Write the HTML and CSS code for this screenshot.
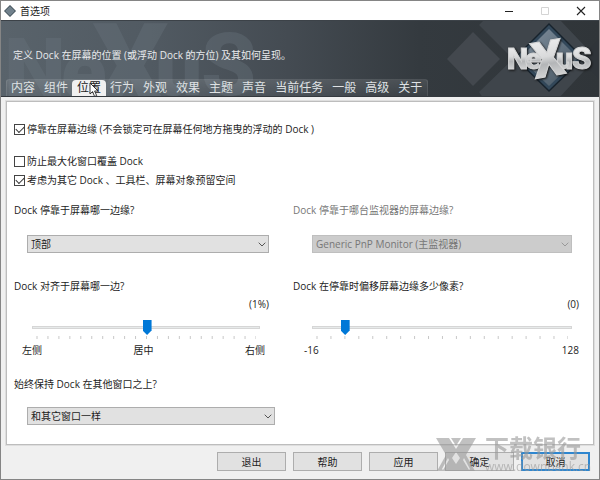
FILE: index.html
```html
<!DOCTYPE html>
<html lang="zh-CN">
<head>
<meta charset="utf-8">
<title>首选项</title>
<link rel="stylesheet" href="styles.css">
</head>
<body>
<div class="window">
  <div class="titlebar">
    <svg class="app-icon" viewBox="0 0 12 12" aria-hidden="true"><path d="M6 0L12 6 6 12 0 6Z" fill="#35424c"/><path d="M6 1L11 6 6 11 1 6Z" fill="#71818c"/></svg>
    <h1 class="title">首选项</h1>
    <button class="caption" type="button" aria-label="最小化"><svg viewBox="0 0 10 10"><path d="M1 5.5H9" stroke="#222"/></svg></button>
    <button class="caption" type="button" aria-label="最大化" disabled><svg viewBox="0 0 10 10"><path d="M1.5 1.5H8.5V8.5H1.5Z" fill="none" stroke="#d4d4d4"/></svg></button>
    <button class="caption" type="button" aria-label="关闭"><svg viewBox="0 0 10 10"><path d="M1 1L9 9M9 1L1 9" stroke="#222" stroke-width="1.1"/></svg></button>
  </div>

  <header class="banner">
    <svg class="ghost" viewBox="0 0 260 77" aria-hidden="true">
      <g class="ghost-text">
        <text x="3" y="79" font-size="88">N</text>
        <text x="60" y="79" font-size="84">e</text>
        <text x="91" y="88" font-size="120">X</text>
        <text x="154" y="74" font-size="84">u</text>
        <text x="200" y="74" font-size="88">S</text>
      </g>
    </svg>
    <svg class="brand" viewBox="0 0 170 77" role="img" aria-label="NeXuS">
      <defs>
        <linearGradient id="metal" x1="0" y1="0" x2="0" y2="1">
          <stop offset="0" stop-color="#f6f6f6"/><stop offset=".45" stop-color="#d9dadb"/><stop offset=".58" stop-color="#b3b5b7"/><stop offset="1" stop-color="#ededed"/>
        </linearGradient>
        <linearGradient id="gem" x1="0" y1="0" x2="1" y2="1">
          <stop offset="0" stop-color="#8492a0"/><stop offset=".5" stop-color="#627280"/><stop offset="1" stop-color="#46545f"/>
        </linearGradient>
      </defs>
      <path d="M44 11L71 38 44 65 18 38Z" fill="#43484e"/>
      <path d="M54 0H132L167 37 130 77H54L50 71 84 38 50 4Z" fill="#3f454b"/>
      <path d="M170 18L150 38 170 58Z" fill="#2f3439"/>
      <path d="M120 2L155 37 120 71 85 37Z" fill="#17222c"/>
      <path d="M120 4L153 37 120 69 87 37Z" fill="#33485a"/>
      <path d="M120 8L149 37 120 65 91 37Z" fill="url(#gem)"/>
      <g class="brand-text">
        <text x="78" y="48" font-size="30">N</text>
        <text x="96" y="48" font-size="30">e</text>
        <text x="127" y="48" font-size="30">u</text>
        <text x="143" y="48" font-size="31">S</text>
        <text x="103" y="55" font-size="50" transform="rotate(-10 120 38)">X</text>
      </g>
    </svg>
    <p class="description">定义 Dock 在屏幕的位置 (或浮动 Dock 的方位) 及其如何呈现。</p>
    <nav class="tabs">
      <a class="tab" href="#content">内容</a>
      <a class="tab" href="#parts">组件</a>
      <a class="tab active" href="#position" aria-current="page">位置
        <svg class="cursor" viewBox="0 0 10 16" aria-hidden="true"><path d="M1 1V12L3.6 9.6 5.6 14.5 7.7 13.6 5.6 9H9Z" fill="#fff" stroke="#222" stroke-width=".9"/></svg>
      </a>
      <a class="tab" href="#behavior">行为</a>
      <a class="tab" href="#appearance">外观</a>
      <a class="tab" href="#effects">效果</a>
      <a class="tab" href="#theme">主题</a>
      <a class="tab" href="#sound">声音</a>
      <a class="tab" href="#tasks">当前任务</a>
      <a class="tab" href="#general">一般</a>
      <a class="tab" href="#advanced">高级</a>
      <a class="tab" href="#about">关于</a>
    </nav>
  </header>

  <main class="panel" id="position">
    <div class="checks">
      <label class="check spaced"><input type="checkbox" checked>停靠在屏幕边缘 (不会锁定可在屏幕任何地方拖曳的浮动的 Dock )</label>
      <label class="check"><input type="checkbox">防止最大化窗口覆盖 Dock</label>
      <label class="check"><input type="checkbox" checked>考虑为其它 Dock 、工具栏、屏幕对象预留空间</label>
    </div>

    <div class="fields">
      <div class="field">
        <label for="edge">Dock 停靠于屏幕哪一边缘?</label>
        <div class="combo">
          <select id="edge"><option>顶部</option></select>
          <svg viewBox="0 0 8 5" aria-hidden="true"><path d="M.7 .7L4 4 7.3 .7"/></svg>
        </div>
      </div>
      <div class="field disabled">
        <label for="monitor">Dock 停靠于哪台监视器的屏幕边缘?</label>
        <div class="combo inset">
          <select id="monitor" disabled><option>Generic PnP Monitor (主监视器)</option></select>
          <svg viewBox="0 0 8 5" aria-hidden="true"><path d="M.7 .7L4 4 7.3 .7"/></svg>
        </div>
      </div>
      <div class="field">
        <label for="align">Dock 对齐于屏幕哪一边?</label>
        <output class="value" for="align">(1%)</output>
        <div class="slider align">
          <input id="align" type="range" min="-100" max="100" value="1">
          <svg class="ticks" viewBox="0 0 220 3" preserveAspectRatio="none" aria-hidden="true"><path d="M.5 1.5H220" stroke-dasharray="1 9.95"/></svg>
        </div>
        <div class="scale"><span>左侧</span><span>居中</span><span>右侧</span></div>
      </div>
      <div class="field">
        <label for="offset">Dock 在停靠时偏移屏幕边缘多少像素?</label>
        <output class="value" for="offset">(0)</output>
        <div class="slider offset">
          <input id="offset" type="range" min="-16" max="128" value="0">
          <svg class="ticks" viewBox="0 0 252 3" preserveAspectRatio="none" aria-hidden="true"><path d="M.5 1.5H252" stroke-dasharray="1 12.94"/></svg>
        </div>
        <div class="scale wide"><span>-16</span><span>128</span></div>
      </div>
      <div class="field">
        <label for="layer">始终保持 Dock 在其他窗口之上?</label>
        <div class="combo long">
          <select id="layer"><option>和其它窗口一样</option></select>
          <svg viewBox="0 0 8 5" aria-hidden="true"><path d="M.7 .7L4 4 7.3 .7"/></svg>
        </div>
      </div>
    </div>
  </main>

  <footer class="actions">
    <button type="button">退出</button>
    <button type="button">帮助</button>
    <button type="button">应用</button>
    <button type="button">确定</button>
    <button type="button" class="focused">取消</button>
    <div class="watermark">
      <svg viewBox="0 0 40 33" aria-hidden="true"><path fill-rule="evenodd" d="M0 0H13L20 11 27 0H40L30 17 39 33H1L10 17ZM20 14L16 20 20 26 24 20ZM12 20L6 31 7 32 13 22ZM28 20L34 31 33 32 27 22Z"/><path d="M15 0H25L20 8Z"/></svg>
      <div class="mark-text"><strong>下载银行</strong><span>www.downbank.cn</span></div>
    </div>
  </footer>
</div>
</body>
</html>
```
FILE: styles.css
```css
* { box-sizing: border-box; }

body {
  margin: 0;
  font: 10px/14px "Open Sans", "Noto Sans CJK SC", sans-serif;
  color: #1c1c1c;
  background: #f0f0f0;
}

button, select { font: inherit; color: inherit; }

.window {
  min-height: 100vh;
  display: flex;
  flex-direction: column;
  border: 1px solid #858585;
}

.titlebar {
  display: flex;
  align-items: center;
  height: 19px;
  padding-left: 3px;
  background: #fff;
}
.app-icon { width: 12px; height: 12px; margin-right: 4px; }
.title { flex: 1; margin: 0; font-size: 10px; line-height: 14px; font-weight: 400; }
.caption {
  display: grid;
  place-items: center;
  width: 36px;
  height: 18px;
  padding: 0;
  border: 0;
  background: none;
}
.caption svg { width: 10px; height: 10px; }

.banner {
  position: relative;
  display: flex;
  flex-direction: column;
  justify-content: space-between;
  height: 77px;
  padding: 27px 5px 0;
  overflow: hidden;
  color: #e8eaec;
  background: linear-gradient(90deg, #59636b 0, #515a62 25%, #444b52 48%, #343a3f 70%, #303539 100%);
  border-top: 1px solid #3c4248;
  border-bottom: 1px solid #34393e;
}
.ghost, .brand { position: absolute; top: 0; height: 77px; }
.ghost { left: 0; width: 260px; }
.brand { right: 0; width: 170px; }
.ghost-text, .brand-text {
  font-family: "Roboto", "Liberation Sans", sans-serif;
  font-weight: 900;
}
.ghost-text { fill: #68737c; opacity: .4; }
.brand-text {
  fill: url(#metal);
  stroke: #d4d5d6;
  stroke-width: 1px;
  filter: drop-shadow(1px 1px 1px #111);
}
.description { position: relative; margin: 0; padding-left: 7px; }

.tabs {
  position: relative;
  display: flex;
  align-self: flex-start;
  height: 17px;
  background: linear-gradient(#ffffff1c, #ffffff08);
  border: 1px solid #ffffff18;
  border-bottom: 0;
  border-radius: 3px 3px 0 0;
}
.tab {
  position: relative;
  padding: 0 5px 0 4px;
  font-size: 12px;
  line-height: 15px;
  color: #dfe2e4;
  text-decoration: none;
  white-space: nowrap;
}
.tab.active {
  margin-left: -1px;
  padding-left: 5px;
  color: #222;
  background: #f0f0f0;
  border-radius: 4px 4px 0 0;
}
.cursor { position: absolute; left: 17px; top: 2px; width: 10px; height: 16px; }

.panel {
  flex: 1;
  margin: 4px 5px 0;
  padding: 20px 14px 0 7px;
  background: #fff;
  border: 1px solid #bdbdbd;
  box-shadow: 0 0 0 1px #dedede;
}

.checks { display: flex; flex-direction: column; gap: 5px; }
.check { display: flex; align-items: center; gap: 2px; }
.check.spaced { margin-bottom: 13px; }
.check input {
  appearance: none;
  display: grid;
  place-items: center;
  width: 11px;
  height: 11px;
  margin: 0;
  border: 1px solid #444;
  background: #fff;
}
.check input:checked::before {
  content: "";
  width: 7px;
  height: 4px;
  margin-bottom: 2px;
  border: solid #333;
  border-width: 0 0 1px 1px;
  transform: rotate(-45deg);
}

.fields {
  display: grid;
  grid-template-columns: 255fr 286fr;
  column-gap: 24px;
  row-gap: 20px;
  padding-top: 16px;
}
.field > label { display: block; }
.disabled { color: #777; }

.combo { position: relative; margin: 18px 0 6px 13px; }
.combo.inset { margin-right: 7px; margin-left: 19px; }
.combo.long { margin-top: 16px; margin-right: -6px; }
.combo select {
  appearance: none;
  display: block;
  width: 100%;
  height: 18px;
  padding: 0 20px 0 3px;
  border: 1px solid #adadad;
  border-radius: 0;
  background: #e1e1e1;
}
.combo select:disabled { color: #777; background: #ccc; border-color: #bfbfbf; opacity: 1; }
.combo svg { position: absolute; right: 3px; top: 7px; width: 8px; height: 5px; fill: none; stroke: #555; pointer-events: none; }
.disabled svg { stroke: #999; }

.value { display: block; margin-top: 4px; text-align: right; }

.slider { margin-top: 8px; }
.slider.align { margin-left: 18px; margin-right: 9px; }
.slider.offset { margin-left: 19px; margin-right: 7px; }
.slider input {
  appearance: none;
  display: block;
  width: 100%;
  height: 17px;
  margin: 0;
  background: none;
}
.slider input::-webkit-slider-runnable-track {
  height: 3px;
  background: #e7eaea;
  border: 1px solid #d6d6d6;
}
.slider input::-webkit-slider-thumb {
  appearance: none;
  width: 9px;
  height: 15px;
  margin-top: -7px;
  background: #0078d7;
  clip-path: polygon(0 0, 100% 0, 100% 70%, 50% 100%, 0 70%);
}
.ticks { display: block; width: calc(100% - 8px); height: 3px; margin: 0 4px; fill: none; stroke: #c8c8c8; stroke-width: 3px; }
.scale { display: flex; justify-content: space-between; margin: 4px 4px 0 8px; }
.scale.wide { margin-right: 0; margin-left: 11px; }

.actions {
  position: relative;
  display: flex;
  justify-content: flex-end;
  gap: 7px;
  padding: 7px 9px 8px;
}
.actions button {
  width: 69px;
  height: 19px;
  padding: 0;
  border: 1px solid #adadad;
  background: #e1e1e1;
}
.actions .focused { border: 2px solid #2e86cf; }

.watermark {
  position: absolute;
  right: 14px;
  bottom: 6px;
  display: flex;
  align-items: center;
  gap: 9px;
  color: #999;
  opacity: .6;
  pointer-events: none;
}
.watermark svg { width: 40px; height: 33px; fill: currentColor; }
.mark-text { display: flex; flex-direction: column; width: 100px; }
.mark-text strong { font-size: 24px; line-height: 24px; font-weight: 700; white-space: nowrap; }
.mark-text span { font-size: 12px; line-height: 13px; }
```
